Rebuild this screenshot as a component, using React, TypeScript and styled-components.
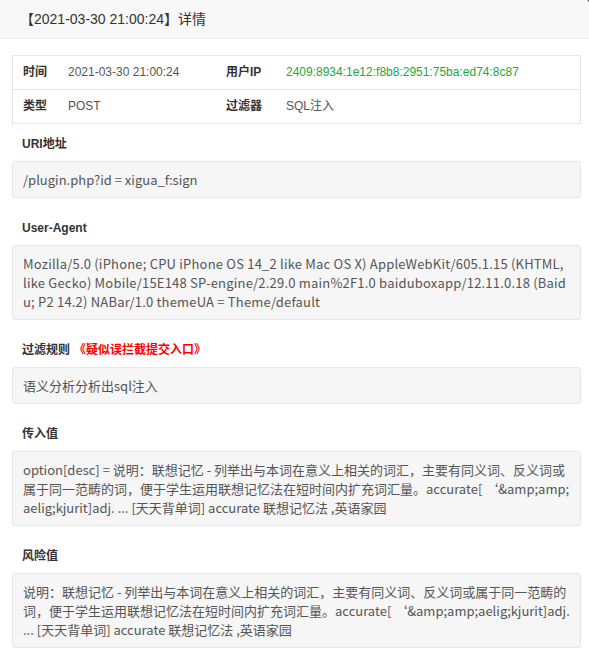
import React from "react"
import styled, { createGlobalStyle } from "styled-components"

const GlobalStyle = createGlobalStyle`
  html, body {
    margin: 0;
    padding: 0;
    background: #fff;
  }
  body {
    font-family: "Liberation Sans", "Noto Sans CJK SC", sans-serif;
    color: #333;
  }
`

type Field = {
  label: string
  value: string
  tone?: "green"
}

const infoRows: Field[][] = [
  [
    { label: "时间", value: "2021-03-30 21:00:24" },
    { label: "用户IP", value: "2409:8934:1e12:f8b8:2951:75ba:ed74:8c87", tone: "green" },
  ],
  [
    { label: "类型", value: "POST" },
    { label: "过滤器", value: "SQL注入" },
  ],
]

type Section = {
  title: string
  note?: string
  body: string
  tracking?: number
}

const sections: Section[] = [
  { title: "URI地址", body: "/plugin.php?id = xigua_f:sign" },
  {
    title: "User-Agent",
    body:
      "Mozilla/5.0 (iPhone; CPU iPhone OS 14_2 like Mac OS X) AppleWebKit/605.1.15 (KHTML, like Gecko) Mobile/15E148 SP-engine/2.29.0 main%2F1.0 baiduboxapp/12.11.0.18 (Baidu; P2 14.2) NABar/1.0 themeUA = Theme/default",
    // latin-only text runs a little wider in the original font
    tracking: 0.2,
  },
  { title: "过滤规则", note: "《疑似误拦截提交入口》", body: "语义分析分析出sql注入" },
  {
    title: "传入值",
    body:
      "option[desc] = 说明：联想记忆 - 列举出与本词在意义上相关的词汇，主要有同义词、反义词或属于同一范畴的词，便于学生运用联想记忆法在短时间内扩充词汇量。accurate[ ‘&amp;amp;aelig;kjurit]adj. ... [天天背单词] accurate 联想记忆法 ,英语家园",
  },
  {
    title: "风险值",
    body:
      "说明：联想记忆 - 列举出与本词在意义上相关的词汇，主要有同义词、反义词或属于同一范畴的词，便于学生运用联想记忆法在短时间内扩充词汇量。accurate[ ‘&amp;amp;aelig;kjurit]adj. ... [天天背单词] accurate 联想记忆法 ,英语家园",
  },
]

function App() {
  return (
    <Layer>
      <GlobalStyle />
      <TitleBar>【2021-03-30 21:00:24】详情</TitleBar>
      <CloseButton aria-label="关闭" />

      <Content>
        <InfoTable>
          <tbody>
            {infoRows.map((row, i) => (
              <Row key={i}>
                {row.map((field) => (
                  <React.Fragment key={field.label}>
                    <LabelCell $wide={field.label.length > 2}>{field.label}</LabelCell>
                    <ValueCell $tone={field.tone}>{field.value}</ValueCell>
                  </React.Fragment>
                ))}
              </Row>
            ))}
          </tbody>
        </InfoTable>

        {sections.map((section) => (
          <Block key={section.title}>
            <BlockTitle>
              {section.title}
              {section.note && <Note>{section.note}</Note>}
            </BlockTitle>
            <BlockBody $tracking={section.tracking}>{section.body}</BlockBody>
          </Block>
        ))}
      </Content>
    </Layer>
  )
}

export default App

const Layer = styled.div`
  position: relative;
  width: 100%;
  min-height: 665px;
  background: #fff;
`

const TitleBar = styled.div`
  height: 38px;
  line-height: 38px;
  padding: 0 80px 0 20px;
  font-size: 14px;
  color: #333;
  background: #f8f8f8;
  border-bottom: 1px solid #eee;
  white-space: nowrap;
`

const CloseButton = styled.span`
  position: absolute;
  top: -22px;
  right: -24px;
  width: 26px;
  height: 26px;
  border-radius: 50%;
  background: #6b6b6b;
  border: 2px solid #fff;
`

const Content = styled.div`
  display: flex;
  flex-direction: column;
  padding: 16px 8px 12px 12px;
`

const InfoTable = styled.table`
  width: 100%;
  border-collapse: collapse;
  border: 1px solid #e6e6e6;
  font-size: 12px;
`

const Row = styled.tr`
  & + & td {
    border-top: 1px solid #e6e6e6;
  }
`

const LabelCell = styled.td<{ $wide?: boolean }>`
  width: ${(p) => (p.$wide ? "50px" : "35px")};
  padding: 6px 0 7px 10px;
  line-height: 20px;
  font-weight: bold;
  color: #333;
  white-space: nowrap;
`

const ValueCell = styled.td<{ $tone?: "green" }>`
  padding: 6px 10px 7px;
  line-height: 20px;
  color: ${(p) => (p.$tone === "green" ? "#22a83c" : "#555")};
  white-space: nowrap;
`

const Block = styled.section`
  display: flex;
  flex-direction: column;
  gap: 7px;
  margin-top: 20px;

  &:first-of-type {
    margin-top: 10px;
  }
`

const BlockTitle = styled.div`
  display: flex;
  align-items: center;
  gap: 4px;
  padding-left: 10px;
  line-height: 20px;
  font-size: 12px;
  font-weight: bold;
  color: #333;
`

const Note = styled.span`
  color: #ff0000;
`

const BlockBody = styled.div<{ $tracking?: number }>`
  padding: 8px 10px;
  line-height: 19px;
  font-family: "Noto Sans CJK SC", sans-serif;
  font-size: 13px;
  letter-spacing: ${(p) => p.$tracking ?? 0}px;
  color: #555;
  background: #f6f6f6;
  border: 1px solid #e6e6e6;
  border-radius: 3px;
  word-break: break-all;
`
